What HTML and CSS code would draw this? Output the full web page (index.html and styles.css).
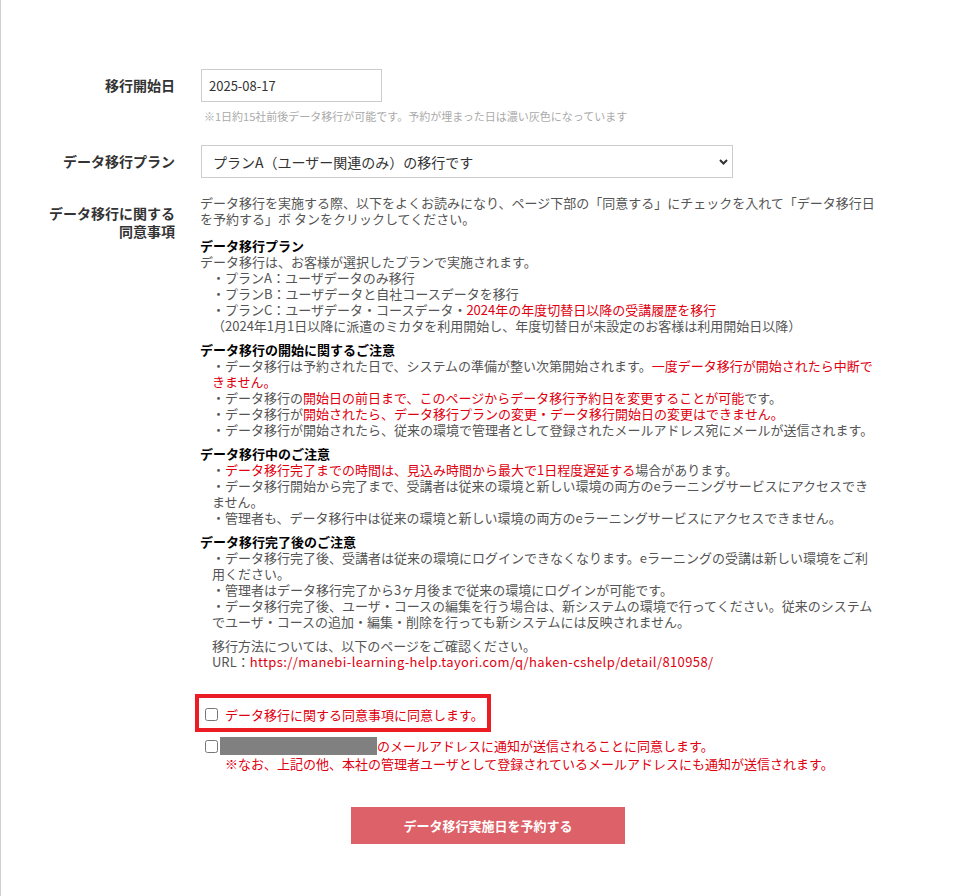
FILE: index.html
```html
<!DOCTYPE html>
<html lang="ja">
<head>
    <meta charset="UTF-8">
    <meta name="viewport" content="width=device-width, initial-scale=1.0">
    <title>データ移行予約</title>
    <link rel="stylesheet" href="styles.css">
</head>
<body>
    <div class="pagina">
        <form class="formulario">
            <div class="fila">
                <div class="etiqueta">移行開始日</div>
                <div class="campo">
                    <input class="entrada-fecha" type="text" value="2025-08-17">
                    <p class="nota">※1日約15社前後データ移行が可能です。予約が埋まった日は濃い灰色になっています</p>
                </div>
            </div>

            <div class="fila fila-plan">
                <div class="etiqueta">データ移行プラン</div>
                <div class="campo">
                    <div class="selector">
                        <select>
                            <option>プランA（ユーザー関連のみ）の移行です</option>
                            <option>プランB（ユーザー・自社コース）の移行です</option>
                            <option>プランC（全データ）の移行です</option>
                        </select>
                        <svg class="flecha" width="9" height="6" viewBox="0 0 9 6"><path d="M1 1l3.5 3.5L8 1" fill="none" stroke="#333" stroke-width="2"/></svg>
                    </div>
                </div>
            </div>

            <div class="fila">
                <div class="etiqueta etiqueta-larga">データ移行に関する<br>同意事項</div>
                <div class="campo texto">
                    <p class="intro">データ移行を実施する際、以下をよくお読みになり、ページ下部の「同意する」にチェックを入れて「データ移行日を予約する」ボ タンをクリックしてください。</p>

                    <div class="seccion">
                        <h3>データ移行プラン</h3>
                        <p>データ移行は、お客様が選択したプランで実施されます。</p>
                        <p class="sangria">
                            ・プランA：ユーザデータのみ移行<br>
                            ・プランB：ユーザデータと自社コースデータを移行<br>
                            ・プランC：ユーザデータ・コースデータ・<span class="aviso">2024年の年度切替日以降の受講履歴を移行</span><br>
                            （2024年1月1日以降に派遣のミカタを利用開始し、年度切替日が未設定のお客様は利用開始日以降）
                        </p>
                    </div>

                    <div class="seccion">
                        <h3>データ移行の開始に関するご注意</h3>
                        <p class="sangria">
                            ・データ移行は予約された日で、システムの準備が整い次第開始されます。<span class="aviso">一度データ移行が開始されたら中断できません。</span><br>
                            ・データ移行の<span class="aviso">開始日の前日まで、このページからデータ移行予約日を変更することが可能</span>です。<br>
                            ・データ移行が<span class="aviso">開始されたら、データ移行プランの変更・データ移行開始日の変更はできません。</span><br>
                            ・データ移行が開始されたら、従来の環境で管理者として登録されたメールアドレス宛にメールが送信されます。
                        </p>
                    </div>

                    <div class="seccion">
                        <h3>データ移行中のご注意</h3>
                        <p class="sangria">
                            ・<span class="aviso">データ移行完了までの時間は、見込み時間から最大で1日程度遅延する</span>場合があります。<br>
                            ・データ移行開始から完了まで、受講者は従来の環境と新しい環境の両方のeラーニングサービスにアクセスできません。<br>
                            ・管理者も、データ移行中は従来の環境と新しい環境の両方のeラーニングサービスにアクセスできません。
                        </p>
                    </div>

                    <div class="seccion">
                        <h3>データ移行完了後のご注意</h3>
                        <p class="sangria">
                            ・データ移行完了後、受講者は従来の環境にログインできなくなります。eラーニングの受講は新しい環境をご利用ください。<br>
                            ・管理者はデータ移行完了から3ヶ月後まで従来の環境にログインが可能です。<br>
                            ・データ移行完了後、ユーザ・コースの編集を行う場合は、新システムの環境で行ってください。従来のシステムでユーザ・コースの追加・編集・削除を行っても新システムには反映されません。
                        </p>
                    </div>

                    <p class="sangria">
                        移行方法については、以下のページをご確認ください。<br>
                        URL：<a class="aviso enlace" href="#">https://manebi-learning-help.tayori.com/q/haken-cshelp/detail/810958/</a>
                    </p>

                    <div class="acuerdos">
                        <label class="acuerdo acuerdo-principal">
                            <input type="checkbox">
                            <span>データ移行に関する同意事項に同意します。</span>
                        </label>
                        <label class="acuerdo acuerdo-correo">
                            <input type="checkbox">
                            <span><span class="oculto"></span>のメールアドレスに通知が送信されることに同意します。<br>※なお、上記の他、本社の管理者ユーザとして登録されているメールアドレスにも通知が送信されます。</span>
                        </label>
                    </div>
                </div>
            </div>

            <div class="acciones">
                <button type="button" class="boton-reservar">データ移行実施日を予約する</button>
            </div>
        </form>
    </div>
</body>
</html>
```

FILE: styles.css
```css
body {
    margin: 0;
    font-family: "Noto Sans CJK JP", "Noto Sans", sans-serif;
    color: #555;
    background: #fff;
}

.pagina {
    min-height: 896px;
    box-sizing: border-box;
    border-left: 1px solid #d0d0d0;
    padding-top: 69px;
}

.fila {
    display: grid;
    grid-template-columns: 174px 680px;
    column-gap: 25px;
    margin-bottom: 21px;
}

.fila-plan {
    margin-bottom: 17px;
}

.etiqueta {
    text-align: right;
    font-size: 14px;
    font-weight: bold;
    line-height: 18px;
    color: #333;
    padding-top: 7px;
}

.etiqueta-larga {
    padding-top: 9px;
}

.entrada-fecha {
    display: block;
    box-sizing: border-box;
    width: 181px;
    height: 33px;
    margin: 0 0 0 1px;
    padding: 0 7px;
    border: 1px solid #ccc;
    font-family: inherit;
    font-size: 13px;
    color: #333;
}

.nota {
    margin: 6px 0 0 4px;
    font-size: 11px;
    line-height: 16px;
    color: #aaa;
}

.selector {
    position: relative;
    width: 532px;
    margin-left: 1px;
}

.selector select {
    display: block;
    appearance: none;
    -webkit-appearance: none;
    box-sizing: border-box;
    width: 100%;
    height: 33px;
    padding: 0 30px 0 11px;
    border: 1px solid #ccc;
    border-radius: 0;
    background: #fff;
    font-family: inherit;
    font-size: 14px;
    color: #333;
}

.flecha {
    position: absolute;
    right: 5px;
    top: 14px;
    pointer-events: none;
}

.texto {
    font-size: 13px;
    line-height: 16px;
}

.texto p {
    margin: 0;
}

.texto .intro {
    margin-bottom: 11px;
}

.seccion {
    margin-bottom: 8px;
}

.seccion h3 {
    margin: 0;
    font-size: 13px;
    line-height: 16px;
    color: #000;
}

.sangria {
    padding-left: 12px;
}

.aviso {
    color: #df0010;
}

.enlace {
    text-decoration: none;
    letter-spacing: 0.4px;
}

.acuerdos {
    margin-top: 24px;
}

.acuerdo {
    display: flex;
    align-items: flex-start;
    gap: 7px;
    color: #df0010;
    cursor: pointer;
}

.acuerdo input {
    width: 13px;
    height: 13px;
    margin: 0;
    flex-shrink: 0;
}

.acuerdo-principal {
    width: fit-content;
    margin-left: -5px;
    padding: 9px 3px 5px 6px;
    border: 4px solid #eb1c24;
}

.acuerdo-principal input {
    margin-top: 1px;
}

.acuerdo-correo {
    margin-top: 5px;
    padding-left: 5px;
    line-height: 17px;
    white-space: nowrap;
}

.acuerdo-correo input {
    margin-top: 3px;
}

.oculto {
    display: inline-block;
    width: 157px;
    height: 18px;
    margin-left: -5px;
    vertical-align: top;
    background: #808080;
}

.acciones {
    margin-top: 35px;
    text-align: center;
}

.boton-reservar {
    width: 274px;
    height: 37px;
    border: none;
    background: #dd6168;
    color: #fff;
    font-family: inherit;
    font-size: 13px;
    font-weight: bold;
    cursor: pointer;
}
```
